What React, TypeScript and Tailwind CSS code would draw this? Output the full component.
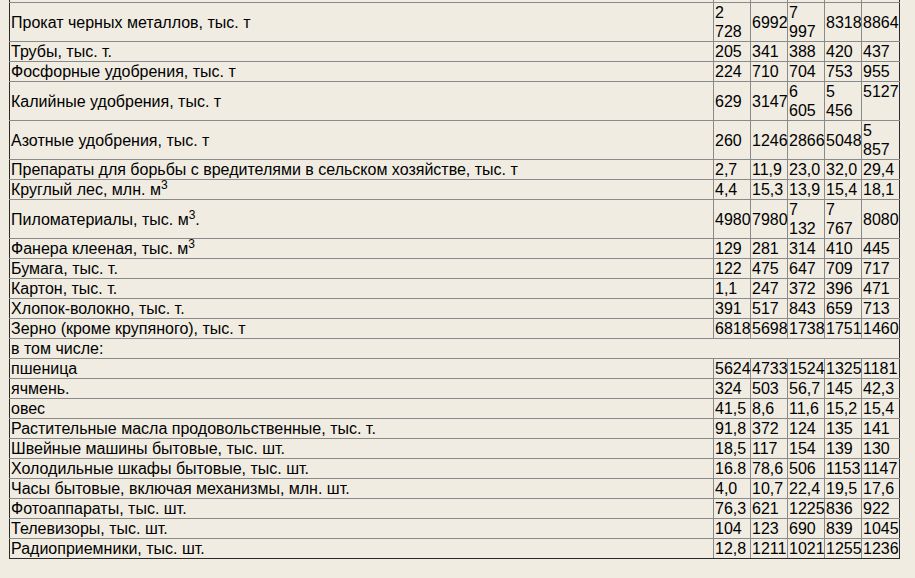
import React from "react";

type Row = { label: React.ReactNode; v: string[]; topLast?: boolean; span?: boolean };

const M3 = () => (
  <>
    м<sup>3</sup>
  </>
);

const rows: Row[] = [
  { label: "Прокат черных металлов, тыс. т", v: ["2 728", "6992", "7 997", "8318", "8864"] },
  { label: "Трубы, тыс. т.", v: ["205", "341", "388", "420", "437"] },
  { label: "Фосфорные удобрения, тыс. т", v: ["224", "710", "704", "753", "955"] },
  { label: "Калийные удобрения, тыс. т", v: ["629", "3147", "6 605", "5 456", "5127"], topLast: true },
  { label: "Азотные удобрения, тыс. т", v: ["260", "1246", "2866", "5048", "5 857"] },
  { label: "Препараты для борьбы с вредителями в сельском хозяйстве, тыс. т", v: ["2,7", "11,9", "23,0", "32,0", "29,4"] },
  { label: <>Круглый лес, млн. <M3 /></>, v: ["4,4", "15,3", "13,9", "15,4", "18,1"] },
  { label: <>Пиломатериалы, тыс. <M3 />.</>, v: ["4980", "7980", "7 132", "7 767", "8080"] },
  { label: <>Фанера клееная, тыс. <M3 /></>, v: ["129", "281", "314", "410", "445"] },
  { label: "Бумага, тыс. т.", v: ["122", "475", "647", "709", "717"] },
  { label: "Картон, тыс. т.", v: ["1,1", "247", "372", "396", "471"] },
  { label: "Хлопок-волокно, тыс. т.", v: ["391", "517", "843", "659", "713"] },
  { label: "Зерно (кроме крупяного), тыс. т", v: ["6818", "5698", "1738", "1751", "1460"] },
  { label: "в том числе:", v: [], span: true },
  { label: "пшеница", v: ["5624", "4733", "1524", "1325", "1181"] },
  { label: "ячмень.", v: ["324", "503", "56,7", "145", "42,3"] },
  { label: "овес", v: ["41,5", "8,6", "11,6", "15,2", "15,4"] },
  { label: "Растительные масла продовольственные, тыс. т.", v: ["91,8", "372", "124", "135", "141"] },
  { label: "Швейные машины бытовые, тыс. шт.", v: ["18,5", "117", "154", "139", "130"] },
  { label: "Холодильные шкафы бытовые, тыс. шт.", v: ["16.8", "78,6", "506", "1153", "1147"] },
  { label: "Часы бытовые, включая механизмы, млн. шт.", v: ["4,0", "10,7", "22,4", "19,5", "17,6"] },
  { label: "Фотоаппараты, тыс. шт.", v: ["76,3", "621", "1225", "836", "922"] },
  { label: "Телевизоры, тыс. шт.", v: ["104", "123", "690", "839", "1045"] },
  { label: "Радиоприемники, тыс. шт.", v: ["12,8", "1211", "1021", "1255", "1236"] },
];

const base =
  "border border-[#8a8a8a] px-[1px] py-0 text-left first:border-l-[#2a2a2a] last:border-r-[#2a2a2a]";

export default function App() {
  const n = rows.length;
  return (
    <div
      className="h-[578px] w-[915px] overflow-hidden bg-[#f0ece2] text-[16px] leading-[19px] text-black"
      style={{ fontFamily: '"Liberation Sans", Arial, sans-serif' }}
    >
      <table className="ml-[9px] mt-[-38px] w-[891px] table-fixed border-collapse">
        <colgroup>
          <col className="w-[704px]" />
          <col className="w-[37px]" />
          <col className="w-[37px]" />
          <col className="w-[37px]" />
          <col className="w-[37px]" />
          <col className="w-[38px]" />
        </colgroup>
        <tbody>
          <tr>
            <td className={base + " h-[40px]"}></td>
            <td className={base}></td>
            <td className={base}></td>
            <td className={base}></td>
            <td className={base}></td>
            <td className={base}></td>
          </tr>
          {rows.map((r, i) => {
            const lastRow = i === n - 1;
            const c = base + " align-middle" + (lastRow ? " border-b-[#2a2a2a]" : "");
            return r.span ? (
              <tr key={i}>
                <td colSpan={6} className={c}>
                  {r.label}
                </td>
              </tr>
            ) : (
              <tr key={i}>
                <td className={c}>{r.label}</td>
                {r.v.map((x, j) => (
                  <td
                    key={j}
                    className={
                      r.topLast && j === 4
                        ? base + " align-top" + (lastRow ? " border-b-[#2a2a2a]" : "")
                        : c
                    }
                  >
                    {x}
                  </td>
                ))}
              </tr>
            );
          })}
        </tbody>
      </table>
    </div>
  );
}
